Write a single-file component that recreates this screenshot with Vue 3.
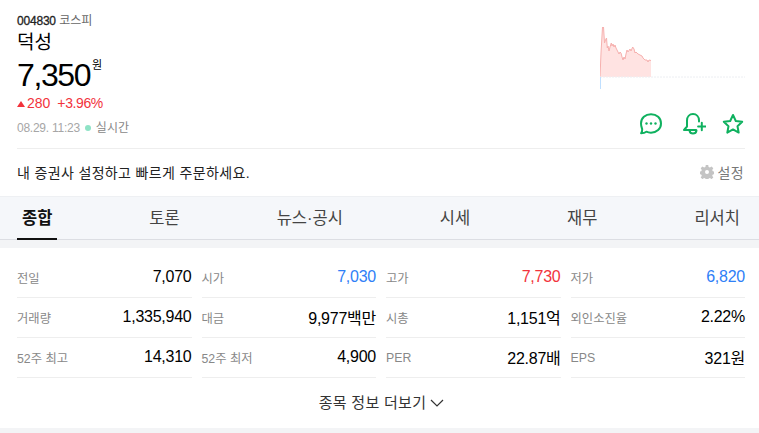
<template>
  <div class="page">
    <div class="summary">
      <div class="summary-left">
        <div class="code-line"><strong>{{ stock.code }}</strong> <span>{{ stock.market }}</span></div>
        <h1 class="name">{{ stock.name }}</h1>
        <div class="price">{{ stock.price }}<span class="won">원</span></div>
        <div class="change"><i class="up"></i>280<span class="rate">+3.96%</span></div>
        <div class="time"><em>08.29. 11:23</em><i class="dot"></i><span>실시간</span></div>
      </div>
      <div class="summary-right">
        <svg class="spark" width="145" height="63" viewBox="0 0 145 63">
          <path class="spark-area" :d="areaPath" />
          <path class="spark-line" :d="linePath" />
          <line class="spark-base" x1="0" y1="50" x2="145" y2="50" />
          <line class="spark-low" x1="0.5" y1="50" x2="0.5" y2="62" />
        </svg>
        <div class="icons">
          <svg width="24" height="24" viewBox="0 0 24 24" class="ico">
            <path d="M12 2.200c5.700 0 10 3.900 10 9.200s-4.300 9.300-10 9.300c-1.700 0-3.200-.3-4.600-1-1.300.9-3 1.400-5.300 1.500.8-1.200 1.200-2.500 1.100-3.900C2.900 16 2 13.900 2 11.400 2 6.100 6.300 2.200 12 2.200z" />
            <circle class="fill" cx="7.500" cy="11.500" r="1.200" />
            <circle class="fill" cx="12" cy="11.500" r="1.200" />
            <circle class="fill" cx="16.500" cy="11.500" r="1.200" />
          </svg>
          <svg width="24" height="24" viewBox="0 0 24 24" class="ico">
            <path d="M17 9.500V8.500C17 4.700 14.500 2 11 2S5 4.700 5 8.500v6L2 18h12" />
            <path d="M7.500 18.500c.3 1.800 1.700 3 3.500 3s3.200-1.200 3.500-3" />
            <path d="M19.800 10.800v7.400M16.100 14.500h7.400" />
          </svg>
          <svg width="22" height="22" viewBox="0 0 22 22" class="ico star">
            <path d="M11 2l2.800 6 6.400.8-4.700 4.400 1.200 6.400-5.700-3.200-5.700 3.200 1.200-6.400L1.800 8.800 8.200 8z" />
          </svg>
        </div>
      </div>
    </div>

    <div class="broker">
      <span>내 증권사 설정하고 빠르게 주문하세요.</span>
      <span class="setting">
        <svg width="14" height="14" viewBox="0 0 14 14">
          <path fill-rule="evenodd" d="M5.800 0h2.400l.4 2 1.300.6L11.600 1.500l1.700 1.700-1.100 1.700.6 1.300 2 .4v2.400l-2 .4-.6 1.300 1.100 1.700-1.700 1.700-1.700-1.100-1.300.6-.4 2H5.800l-.4-2-1.300-.6-1.700 1.100L.7 12.400l1.100-1.700-.6-1.300-2-.4V6.600l2-.4.600-1.300L.7 3.200 2.400 1.500l1.700 1.100 1.300-.6zM7 5a2 2 0 1 0 0 4 2 2 0 0 0 0-4z" />
        </svg>
        설정
      </span>
    </div>

    <div class="tabs">
      <a v-for="(t, i) in tabs" :key="t" class="tab" :class="{ active: i === 0 }">{{ t }}</a>
    </div>

    <div class="info">
      <div v-for="item in items" :key="item.label" class="cell">
        <span class="label">{{ item.label }}</span>
        <span class="value" :class="item.tone">{{ item.value }}</span>
      </div>
    </div>

    <div class="more">
      종목 정보 더보기
      <svg width="14" height="8" viewBox="0 0 14 8"><path d="M1 1l6 6 6-6" /></svg>
    </div>
    <div class="band"></div>
  </div>
</template>

<script setup>
const stock = {
  code: '004830',
  market: '코스피',
  name: '덕성',
  price: '7,350',
}

const tabs = ['종합', '토론', '뉴스·공시', '시세', '재무', '리서치']

const items = [
  { label: '전일', value: '7,070' },
  { label: '시가', value: '7,030', tone: 'blue' },
  { label: '고가', value: '7,730', tone: 'red' },
  { label: '저가', value: '6,820', tone: 'blue' },
  { label: '거래량', value: '1,335,940' },
  { label: '대금', value: '9,977백만' },
  { label: '시총', value: '1,151억' },
  { label: '외인소진율', value: '2.22%' },
  { label: '52주 최고', value: '14,310' },
  { label: '52주 최저', value: '4,900' },
  { label: 'PER', value: '22.87배' },
  { label: 'EPS', value: '321원' },
]

// 차트 좌표 (x, y)
const points = [
  [0, 50], [1, 26], [2.5, 0], [3.5, 0], [4.5, 16], [5.5, 13], [6.5, 11], [7.3, 21], [8, 19], [9, 24],
  [10, 20], [11.3, 16], [12, 19], [13, 17], [14, 20], [15, 18], [16, 21], [17, 23], [18, 25], [19, 27],
  [20, 25], [21, 26], [22, 30], [23, 33], [24, 30], [25, 32], [26, 27], [27, 23], [28, 25], [30, 22],
  [31, 24], [32.7, 20], [34, 22], [35, 26], [36, 25], [38, 27], [40, 28], [42, 29], [43, 31], [45, 33],
  [47, 33], [48, 35], [49, 33], [51, 33.500],
]
const linePath = 'M' + points.map(p => p.join(' ')).join('L')
const areaPath = linePath + 'L51 50Z'
</script>

<style>
html, body {
  background: #fff;
}
</style>

<style scoped>
.page {
  width: 759px;
  height: 433px;
  overflow: hidden;
  font-family: "Liberation Sans", "Noto Sans CJK KR", sans-serif;
  color: #000;
  background: #fff;
}

.summary {
  display: flex;
  justify-content: space-between;
  margin: 0 14px 0 17px;
  height: 148px;
  border-bottom: 1px solid #eee;
  box-sizing: content-box;
}

.code-line {
  margin-top: 14px;
  font-size: 12px;
  line-height: 14px;
  color: #666;
}
.code-line strong {
  color: #222;
  font-weight: normal;
  letter-spacing: -0.2px;
  -webkit-text-stroke: 0.3px #222;
}

.name {
  margin: 2px 0 0;
  font-size: 19px;
  line-height: 25px;
  font-weight: normal;
}

.price {
  margin-top: 1px;
  font-size: 32px;
  line-height: 38px;
  letter-spacing: -1.4px;
  display: flex;
  align-items: flex-start;
}
.won {
  font-size: 11px;
  line-height: 12px;
  letter-spacing: 0;
  margin: 3px 0 0 2px;
}

.change {
  margin-top: 1px;
  font-size: 14px;
  line-height: 17px;
  color: #f2333c;
  display: flex;
  align-items: center;
}
.up {
  width: 0;
  height: 0;
  border-left: 4px solid transparent;
  border-right: 4px solid transparent;
  border-bottom: 6px solid #f2333c;
  margin-right: 2px;
}
.rate {
  margin-left: 7px;
  letter-spacing: -0.4px;
}

.time {
  margin-top: 8px;
  font-size: 12px;
  line-height: 16px;
  color: #a6a6a6;
  display: flex;
  align-items: center;
}
.time em {
  font-style: normal;
  letter-spacing: -0.25px;
}
.time span {
  color: #888;
}
.dot {
  width: 6px;
  height: 6px;
  border-radius: 50%;
  background: #8fe3c6;
  margin: 0 5px;
}

.summary-right {
  display: flex;
  flex-direction: column;
  align-items: flex-end;
}
.spark {
  margin-top: 27px;
  display: block;
}
.spark-area { fill: #ffe3e2; }
.spark-line { fill: none; stroke: #f6b0ae; stroke-width: 1; }
.spark-base { stroke: #eceef2; stroke-width: 1; stroke-dasharray: 2 1; }
.spark-low { stroke: #bfdfff; stroke-width: 1; }

.icons {
  display: flex;
  align-items: center;
  gap: 19px;
  margin: 22px 1px 0 0;
}
.ico {
  display: block;
  fill: none;
  stroke: #0fb15f;
  stroke-width: 2;
  stroke-linejoin: round;
  stroke-linecap: round;
}
.ico.star {
  margin-left: -3px;
}
.ico .fill {
  fill: #0fb15f;
  stroke: none;
}

.broker {
  display: flex;
  justify-content: space-between;
  align-items: center;
  box-sizing: border-box;
  height: 47px;
  padding: 0 15px 2px 17px;
  font-size: 14px;
  letter-spacing: 0.35px;
  color: #222;
}
.setting {
  display: flex;
  align-items: center;
  gap: 4px;
  font-size: 14px;
  color: #777;
}
.setting svg {
  fill: #c4c4c4;
}

.tabs {
  display: flex;
  justify-content: space-between;
  box-sizing: border-box;
  height: 44px;
  padding: 0 14px 0 17px;
  background: #f5f7fa;
  border-top: 1px solid #eef0f3;
  border-bottom: 1px solid #dcdee3;
}
.tab {
  padding: 0 5px;
  font-size: 16.500px;
  line-height: 42px;
  height: 43px;
  box-sizing: border-box;
  color: #444;
}
.tab.active {
  color: #111;
  font-weight: bold;
  border-bottom: 2px solid #111;
}

.info {
  border-top: 8px solid #f3f4f6;
  padding: 10px 14px 0 17px;
  display: grid;
  grid-template-columns: repeat(4, 1fr);
  column-gap: 10px;
}
.cell {
  display: flex;
  justify-content: space-between;
  align-items: center;
  height: 40px;
  box-sizing: border-box;
  border-bottom: 1px solid #eee;
}
.label {
  font-size: 12.300px;
  color: #888;
}
.value {
  font-size: 16px;
  letter-spacing: -0.25px;
  padding-bottom: 2px;
  color: #000;
}
.value.blue { color: #2f80f7; }
.value.red { color: #f2333c; }

.more {
  display: flex;
  align-items: center;
  justify-content: center;
  gap: 4px;
  box-sizing: border-box;
  height: 50px;
  padding: 0 0 3px 4px;
  font-size: 15px;
  letter-spacing: 0.3px;
  color: #333;
}
.more svg {
  fill: none;
  stroke: #333;
  stroke-width: 1.2;
  margin-top: 3px;
}

.band {
  height: 8px;
  background: #f3f4f6;
}
</style>
